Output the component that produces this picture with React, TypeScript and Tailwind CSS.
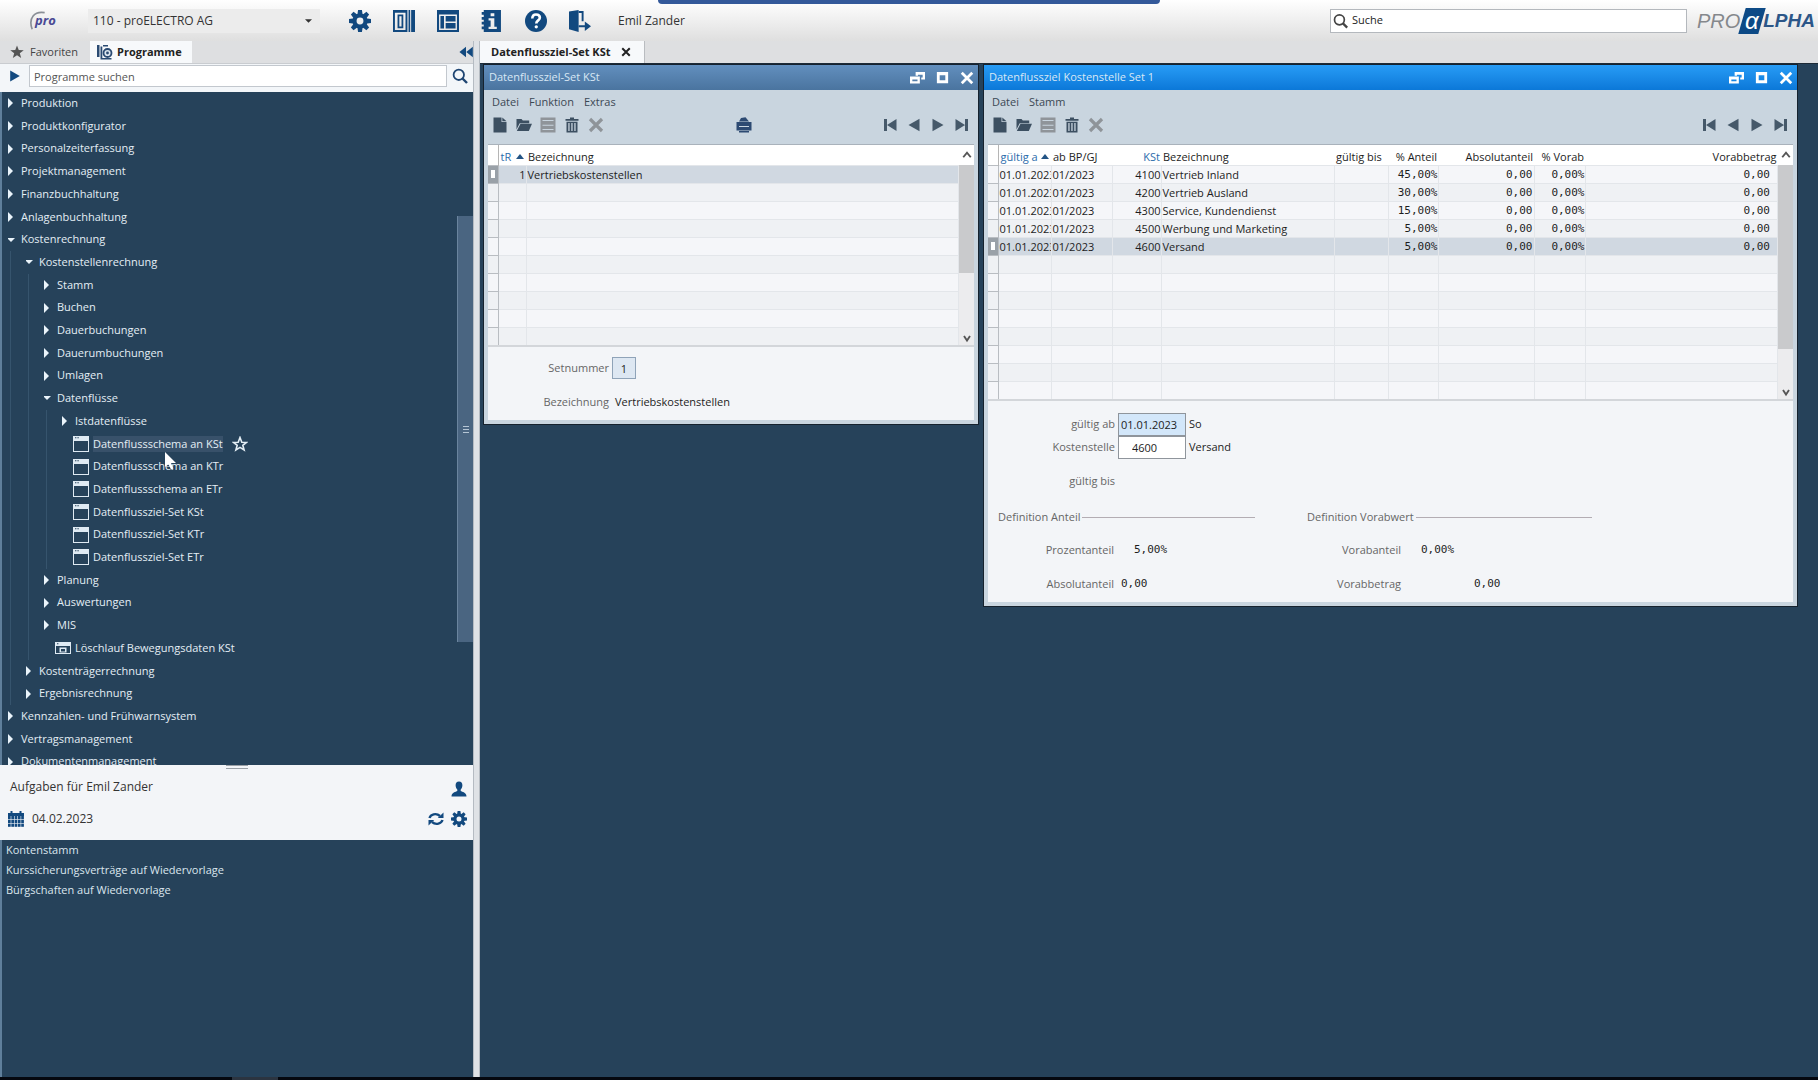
import React from "react";

type IconProps = { className?: string };

const Svg = ({ className = "size-4", children }: React.PropsWithChildren<IconProps>) => (
  <svg viewBox="0 0 16 16" className={className} fill="currentColor" aria-hidden="true">
    {children}
  </svg>
);

const teeth = [0, 45, 90, 135, 180, 225, 270, 315];
const Gear = ({ className }: IconProps) => (
  <Svg className={className}>
    {teeth.map((a) => (
      <path key={a} d="M6.6 0h2.8l.6 4H6z" transform={`rotate(${a} 8 8)`} />
    ))}
    <circle cx="8" cy="8" r="4" fill="none" stroke="currentColor" strokeWidth="3" />
  </Svg>
);
const Columns = ({ className }: IconProps) => (
  <Svg className={className}>
    <path fillRule="evenodd" d="M0 0h10.5v16H0zM1.4 2v12.500h7.700V2zM3.300 3.300h4.200v10H3.300zM4.600 4.500v7.500h1.600V4.500z" />
    <path d="M11.300 0h1.200v16h-1.200zM13.200 0H16v16h-2.800z" />
  </Svg>
);
const Layout = ({ className }: IconProps) => (
  <Svg className={className}>
    <path fillRule="evenodd" d="M0 0h16v16H0zM1.500 3.300v11.200h13V3.300z" />
    <path d="M2.500 4.300h2.600v9.200H2.500zM6.300 4.300h7.200v4H6.300zM6.300 9.500h7.200v4H6.300z" />
  </Svg>
);
const InfoBook = ({ className }: IconProps) => (
  <Svg className={className}>
    <path fillRule="evenodd" d="M2 0h12.500v16H2v-2H.5v-2H2v-1.500H.5v-2H2V7H.5V5H2V3.500H.5v-2H2zM7 2.300v2.200h2.700V2.300zM5.500 6v1.700H7v4.400H5.500v1.700h6v-1.700H9.700V6z" />
  </Svg>
);
const Help = ({ className }: IconProps) => (
  <Svg className={className}>
    <circle cx="8" cy="8" r="8" />
    <path d="M5.300 6.200C5.400 4 6.600 3.300 8 3.300s2.800.8 2.800 2.400C10.800 7.600 8.200 7.500 8.200 9.800" fill="none" stroke="#fff" strokeWidth="1.900" />
    <circle cx="8.200" cy="12.200" r="1.200" fill="#fff" />
  </Svg>
);
const Exit = ({ className }: IconProps) => (
  <Svg className={className}>
    <path d="M0 1l7-1v16l-7-2z" />
    <path d="M7 .8h3.600v7.400H9.200V2.200H7zM7 11h4.500V8.300l4.500 3.500-4.500 3.500v-2.700H7z" />
  </Svg>
);
const Star = ({ className }: IconProps) => (
  <Svg className={className}>
    <path d="M8 .5l2 5.200 5.700.2-4.500 3.400 1.600 5.500L8 11.600l-4.800 3.200 1.600-5.500L.3 5.900 6 5.700z" />
  </Svg>
);
const StarOutline = ({ className }: IconProps) => (
  <Svg className={className}>
    <path d="M8 1.500l1.800 4.700 4.700.2-3.700 2.900 1.300 4.700L8 11.400 3.900 14l1.300-4.700L1.500 6.400l4.700-.2z" fill="none" stroke="currentColor" strokeWidth="1.600" />
  </Svg>
);
const ProgramIcon = ({ className }: IconProps) => (
  <Svg className={className}>
    <path d="M0 1h2.500v12H0zM3.500 2.500h1.800V14H3.500zM6 1h5v1.500H6z" />
    <circle cx="10.500" cy="9" r="4" fill="#dce6f0" stroke="currentColor" strokeWidth="1.800" />
    <circle cx="10.500" cy="9" r="1.400" />
    <path d="M3.500 14h11v1.500h-11z" />
  </Svg>
);
const Lens = ({ className }: IconProps) => (
  <Svg className={className}>
    <circle cx="6.800" cy="6.800" r="5.200" fill="none" stroke="currentColor" strokeWidth="1.800" />
    <path d="M10.500 10.500l4.500 4.500" stroke="currentColor" strokeWidth="2.400" />
  </Svg>
);
const Collapse = ({ className }: IconProps) => (
  <Svg className={className}>
    <path d="M8 2v12L.5 8zM15.800 2v12L8.300 8z" />
  </Svg>
);
const Person = ({ className }: IconProps) => (
  <Svg className={className}>
    <path d="M8 .5c2.300 0 3.400 1.600 3.400 3.800 0 1.900-.8 3.400-1.700 4.200v1.600c1.500 1 5.800 1.300 5.800 5.400H.5c0-4.100 4.300-4.400 5.800-5.400V8.500C5.400 7.700 4.600 6.200 4.600 4.300 4.600 2.100 5.700.5 8 .5z" />
  </Svg>
);
const Calendar = ({ className }: IconProps) => (
  <Svg className={className}>
    <path d="M0 2h16v3H0zM2.500 0h2v3h-2zM11.500 0h2v3h-2z" />
    {[5, 8.800, 12.600].map((y) =>
      [0, 3.300, 6.600, 9.900, 13.200].map((x) => <rect key={`${x}-${y}`} x={x} y={y} width="2.700" height="3.200" />)
    )}
  </Svg>
);
const Refresh = ({ className }: IconProps) => (
  <Svg className={className}>
    <path d="M1.500 7C2.500 3.500 8 1.500 12 5M14.500 9C13.500 12.500 8 14.500 4 11" fill="none" stroke="currentColor" strokeWidth="2.400" />
    <path d="M15.500 1.500V7H9.800zM.5 14.500V9h5.700z" />
  </Svg>
);
const Doc = ({ className }: IconProps) => (
  <Svg className={className}>
    <path d="M1.500.5h8v4.500h5v10.500h-13z" />
    <path d="M10.300.5l4.200 3.800h-4.200z" />
  </Svg>
);
const Folder = ({ className }: IconProps) => (
  <Svg className={className}>
    <path d="M.5 2h5l1.300 1.600h6.400v2.600H3.700L.5 12.500z" />
    <path d="M4.500 6.800H16l-3.200 7.200H.8z" />
  </Svg>
);
const Save = ({ className }: IconProps) => (
  <Svg className={className}>
    <path fillRule="evenodd" d="M.5.500h15v15H.5zM2.500 3v1h11V3zM2.500 7.800v1h11v-1zM2.500 12v1h11v-1z" />
  </Svg>
);
const Trash = ({ className }: IconProps) => (
  <Svg className={className}>
    <path d="M6 .5h4v1.400h4.500v1.900h-13V1.900H6z" />
    <path fillRule="evenodd" d="M2.500 4.800h11v10.700h-11zM4.300 6v8h1.300V6zM7.300 6v8h1.300V6zM10.300 6v8h1.300V6z" />
  </Svg>
);
const Cross = ({ className }: IconProps) => (
  <Svg className={className}>
    <path d="M2 2l12 12M14 2L2 14" stroke="currentColor" strokeWidth="3.200" />
  </Svg>
);
const Printer = ({ className }: IconProps) => (
  <Svg className={className}>
    <path d="M3 4.500L5 1l4.500-.8L13 4.500z" />
    <path fillRule="evenodd" d="M.5 5h15v8.500h-15zM3 9v1h10V9z" />
    <path d="M3 14h10v1.500H3z" />
  </Svg>
);
const First = ({ className }: IconProps) => (
  <Svg className={className}>
    <path d="M2 2h3v12H2zM14.500 2v12L5 8z" />
  </Svg>
);
const Prev = ({ className }: IconProps) => (
  <Svg className={className}>
    <path d="M13.500 1.800v12.400L2.500 8z" />
  </Svg>
);
const Next = ({ className }: IconProps) => (
  <Svg className={className}>
    <path d="M2.500 1.800v12.400L13.500 8z" />
  </Svg>
);
const Last = ({ className }: IconProps) => (
  <Svg className={className}>
    <path d="M11 2h3v12h-3zM1.500 2v12L11 8z" />
  </Svg>
);
const Restore = ({ className }: IconProps) => (
  <Svg className={className}>
    <path fillRule="evenodd" d="M6 2h10v8h-4V8h1.500V5H8.500v1H6zM0 7h10.500v7.500H0zM2.500 10v2h5.500v-2z" />
  </Svg>
);
const Maximize = ({ className }: IconProps) => (
  <Svg className={className}>
    <path fillRule="evenodd" d="M2 2h12v12H2zM5 5.500V11h6V5.500z" />
  </Svg>
);
const WindowIcon = ({ className }: IconProps) => (
  <Svg className={className}>
    <path fillRule="evenodd" d="M0 0h16v16H0zM1 5v10h14V5zM2 1.200v1h1.400v-1zM4.400 1.200v1h1.400v-1z" />
  </Svg>
);
const BatchIcon = ({ className }: IconProps) => (
  <Svg className={className}>
    <path fillRule="evenodd" d="M0 2h16v12H0zM1 6v7h14V6zM2 3.200v1h1.400v-1z" />
    <path d="M4.500 7.500h7v5h-7zM6 9h4v2.500H6z" fillRule="evenodd" />
  </Svg>
);
const Chevron = ({ down = false }: { down?: boolean }) => (
  <svg viewBox="0 0 16 16" className="size-3 shrink-0" fill="none" stroke="#555" strokeWidth="2.500" aria-hidden="true">
    <path d={down ? "M4 4l4 6 4-6" : "M3 11l5-6 5 6"} />
  </svg>
);

const headerIcons = [
  { label: "Einstellungen", Icon: Gear },
  { label: "Spalten", Icon: Columns },
  { label: "Layout", Icon: Layout },
  { label: "Information", Icon: InfoBook },
  { label: "Hilfe", Icon: Help },
  { label: "Abmelden", Icon: Exit },
];

function Header() {
  return (
    <header className="relative flex h-[41px] shrink-0 items-center bg-linear-to-b from-white to-[#dfdfdf]">
      <div className="absolute top-0 left-1/2 h-[4px] w-[502px] -translate-x-1/2 rounded-b-md bg-[#34599a]" />
      <div className="relative ml-7 w-[60px] text-[13px] font-bold text-[#4a4a94] italic">
        <svg viewBox="0 0 24 24" className="absolute top-0 left-0 size-5" fill="none" stroke="#8a8f96" strokeWidth="2" aria-hidden="true">
          <path d="M20 2C8 0 0 8 5 22" />
        </svg>
        <span className="pl-[7px]">pro</span>
      </div>
      <div className="relative flex h-6 w-[232px] items-center">
        <select aria-label="Mandant" className="h-full w-full appearance-none bg-[#ececec] pl-[5px] text-[12px] text-[#333]">
          <option>110 - proELECTRO AG</option>
        </select>
        <svg viewBox="0 0 8 4" className="pointer-events-none absolute right-[8px] h-[4px] w-[7px]" fill="#333" aria-hidden="true">
          <path d="M0 0h8L4 4z" />
        </svg>
      </div>
      <nav className="ml-[29px] flex items-center gap-[22px] text-[#12497f]">
        {headerIcons.map(({ label, Icon }) => (
          <button key={label} aria-label={label} className="flex">
            <Icon className="size-[22px]" />
          </button>
        ))}
      </nav>
      <span className="ml-[27px] text-[12px] text-[#333]">Emil Zander</span>
      <label className="mr-[10px] ml-auto flex h-6 w-[357px] items-center border border-[#b4b8bd] bg-white pl-[2px] text-[#444]">
        <Lens className="size-4" />
        <input aria-label="Suche" defaultValue="Suche" className="ml-1 w-full bg-transparent text-[11px] text-[#222] outline-none" />
      </label>
      <div className="mr-[3px] flex items-center font-['Liberation_Sans',sans-serif] text-[19px] leading-6 italic">
        <span className="text-[20px] text-[#85888c]">PRO</span>
        <span className="relative flex h-[26px] w-[23px] items-center justify-center text-[24px] text-white">
          <span className="absolute inset-y-0 left-[2px] w-[20px] -skew-x-[16deg] bg-[#0d4a86]" />
          <span className="relative">α</span>
        </span>
        <span className="font-bold text-[#2c5688]">LPHA</span>
      </div>
    </header>
  );
}

type Node = { depth: number; label: string; kind?: "open" | "leaf" | "batch"; hover?: boolean };
const tree: Node[] = [
  { depth: 0, label: "Produktion" },
  { depth: 0, label: "Produktkonfigurator" },
  { depth: 0, label: "Personalzeiterfassung" },
  { depth: 0, label: "Projektmanagement" },
  { depth: 0, label: "Finanzbuchhaltung" },
  { depth: 0, label: "Anlagenbuchhaltung" },
  { depth: 0, label: "Kostenrechnung", kind: "open" },
  { depth: 1, label: "Kostenstellenrechnung", kind: "open" },
  { depth: 2, label: "Stamm" },
  { depth: 2, label: "Buchen" },
  { depth: 2, label: "Dauerbuchungen" },
  { depth: 2, label: "Dauerumbuchungen" },
  { depth: 2, label: "Umlagen" },
  { depth: 2, label: "Datenflüsse", kind: "open" },
  { depth: 3, label: "Istdatenflüsse" },
  { depth: 3, label: "Datenflussschema an KSt", kind: "leaf", hover: true },
  { depth: 3, label: "Datenflussschema an KTr", kind: "leaf" },
  { depth: 3, label: "Datenflussschema an ETr", kind: "leaf" },
  { depth: 3, label: "Datenflussziel-Set KSt", kind: "leaf" },
  { depth: 3, label: "Datenflussziel-Set KTr", kind: "leaf" },
  { depth: 3, label: "Datenflussziel-Set ETr", kind: "leaf" },
  { depth: 2, label: "Planung" },
  { depth: 2, label: "Auswertungen" },
  { depth: 2, label: "MIS" },
  { depth: 2, label: "Löschlauf Bewegungsdaten KSt", kind: "batch" },
  { depth: 1, label: "Kostenträgerrechnung" },
  { depth: 1, label: "Ergebnisrechnung" },
  { depth: 0, label: "Kennzahlen- und Frühwarnsystem" },
  { depth: 0, label: "Vertragsmanagement" },
  { depth: 0, label: "Dokumentenmanagement" },
];

function TreeRow({ depth, label, kind, hover }: Node) {
  const leaf = kind === "leaf" || kind === "batch";
  return (
    <li className="flex items-center">
      {Array.from({ length: depth }, (_, i) => (
        <span key={i} className="flex w-[18px] shrink-0 self-stretch pl-[2px]">
          <span className="border-l border-[#36546d]" />
        </span>
      ))}
      <button className="flex items-center">
        {leaf ? (
          <span className="mr-1 ml-[11px] flex text-[#dfeaf3]">
            {kind === "leaf" ? <WindowIcon /> : <BatchIcon />}
          </span>
        ) : (
          <svg viewBox="0 0 13 10" className="h-[10px] w-[13px]" fill="#eaf4fb" aria-hidden="true">
            <path d={kind === "open" ? "M-1 3h8L3 7z" : "M0 0v10L5 5z"} />
          </svg>
        )}
        <span className={hover ? "bg-[#38516a]" : ""}>{label}</span>
      </button>
      {hover && (
        <button aria-label="Zu Favoriten hinzufügen" className="ml-[9px] text-[#e4eef5]">
          <StarOutline />
        </button>
      )}
    </li>
  );
}

function Sidebar() {
  return (
    <aside className="flex w-[473px] shrink-0 flex-col">
      <div role="tablist" className="flex h-[22px] shrink-0 items-stretch bg-[#dedfe1]">
        <button role="tab" aria-selected="false" className="flex w-[90px] items-center gap-[6px] pl-[10px] text-[11px] text-[#444]">
          <Star className="size-[14px] text-[#555]" />
          Favoriten
        </button>
        <button role="tab" aria-selected="true" className="flex w-[102px] items-center gap-1 bg-[#f7f9fb] pl-[7px] text-[11px] font-bold text-[#222]">
          <ProgramIcon className="size-4 text-[#2a4a72]" />
          Programme
        </button>
        <button aria-label="Einklappen" className="mr-0 ml-auto flex items-center text-[#12497f]">
          <Collapse className="size-[14px]" />
        </button>
      </div>
      <div className="flex h-[29px] shrink-0 items-center border-t border-[#c9ccd0] bg-[#f3f6f9] pb-1">
        <button aria-label="Ausführen" className="ml-2 flex text-[#12497f]">
          <Next className="size-[14px]" />
        </button>
        <input aria-label="Programme suchen" defaultValue="Programme suchen" className="ml-[7px] h-[22px] min-w-0 flex-1 border border-[#c3c8ce] bg-white px-1 text-[11px] text-[#555] outline-none" />
        <button aria-label="Suchen" className="mx-[5px] flex text-[#1f4572]">
          <Lens className="size-4" />
        </button>
      </div>
      <div className="relative flex h-[673px] shrink-0 overflow-hidden border-l-2 border-[#5f7f9b] bg-[#26425a]">
        <ul className="ml-[6px] grid h-[681px] flex-1 auto-rows-fr text-[11px] text-[#e4eef5]">
          {tree.map((n) => (
            <TreeRow key={n.label} {...n} />
          ))}
        </ul>
        <div className="flex w-4 flex-col items-center pt-[124px]">
          <div className="flex h-[426px] w-full flex-col items-center justify-center gap-[2px] border-l border-[#6a849e] bg-[#4a6581]">
            <span className="h-px w-[6px] bg-[#b6c6d5]" />
            <span className="h-px w-[6px] bg-[#b6c6d5]" />
            <span className="h-px w-[6px] bg-[#b6c6d5]" />
          </div>
        </div>
        <svg viewBox="0 0 12 18" className="pointer-events-none absolute top-[360px] left-[163px] h-[18px] w-3" fill="#fff" aria-hidden="true">
          <path d="M0 0v15l3.500-3 2.500 5.500 2.300-1L6 11h5z" />
        </svg>
      </div>
      <section className="shrink-0 bg-[#f3f5f8] pb-[7px] text-[#333]">
        <div className="mx-auto flex h-1 w-[22px] border-y border-[#9aa0a6]" />
        <div className="flex h-9 items-center justify-between pr-[6px] pl-[10px]">
          <h2 className="text-[12px]">Aufgaben für Emil Zander</h2>
          <button aria-label="Benutzer" className="flex pt-1 text-[#12497f]">
            <Person />
          </button>
        </div>
        <div className="flex h-7 items-center pr-[6px] pl-2">
          <Calendar className="size-4 text-[#12497f]" />
          <span className="ml-2 text-[12px]">04.02.2023</span>
          <button aria-label="Aktualisieren" className="mr-[7px] ml-auto flex text-[#12497f]">
            <Refresh />
          </button>
          <button aria-label="Aufgaben einstellen" className="flex text-[#12497f]">
            <Gear />
          </button>
        </div>
      </section>
      <ul className="min-h-0 flex-1 border-l-2 border-[#5f7f9b] bg-[#26425a] text-[11px] leading-5 text-[#dbe6ee]">
        <li className="pl-1">Kontenstamm</li>
        <li className="pl-1">Kurssicherungsverträge auf Wiedervorlage</li>
        <li className="pl-1">Bürgschaften auf Wiedervorlage</li>
      </ul>
    </aside>
  );
}

const tools = [
  { label: "Neu", Icon: Doc },
  { label: "Öffnen", Icon: Folder },
  { label: "Speichern", Icon: Save, disabled: true },
  { label: "Löschen", Icon: Trash },
  { label: "Abbrechen", Icon: Cross, disabled: true },
];
const navs = [
  { label: "Erster", Icon: First },
  { label: "Vorheriger", Icon: Prev },
  { label: "Nächster", Icon: Next },
  { label: "Letzter", Icon: Last },
];

type WindowProps = React.PropsWithChildren<{ title: string; active?: boolean; menu: string[]; printer?: boolean; className: string }>;

function Window({ title, active, menu, printer, className, children }: WindowProps) {
  return (
    <section className={`absolute top-0 flex flex-col border border-[#16222e] bg-[#c9d5df] ${className}`}>
      <div className={`flex h-[25px] shrink-0 items-center pr-1 pl-[5px] text-white ${active ? "bg-linear-to-b from-[#279cf6] to-[#0b78d8]" : "bg-linear-to-b from-[#628fbe] to-[#4a749f]"}`}>
        <h2 className="text-[11px] text-[#d8e8f5]">{title}</h2>
        <div className="ml-auto flex items-center gap-[10px]">
          <button aria-label="Wiederherstellen" className="flex"><Restore className="size-[15px]" /></button>
          <button aria-label="Maximieren" className="flex"><Maximize className="size-[15px]" /></button>
          <button aria-label="Schließen" className="flex"><Cross className="size-[14px]" /></button>
        </div>
      </div>
      <div className="flex h-6 shrink-0 items-center gap-[10px] pl-2 text-[11px] text-[#3c4854]">
        {menu.map((m) => (
          <button key={m}>{m}</button>
        ))}
      </div>
      <div className="flex h-[30px] shrink-0 items-start pt-[3px] pr-[8px] pl-2 text-[#3c4f61]">
        <div className="flex gap-2">
          {tools.map(({ label, Icon, disabled }) => (
            <button key={label} aria-label={label} disabled={disabled} className={disabled ? "text-[#8f9499]" : ""}>
              <Icon />
            </button>
          ))}
        </div>
        {printer && (
          <button aria-label="Drucken" className="ml-[132px] text-[#2d4a72]">
            <Printer />
          </button>
        )}
        <div className="ml-auto flex gap-2">
          {navs.map(({ label, Icon }) => (
            <button key={label} aria-label={label}>
              <Icon className="size-4 text-[#46596a]" />
            </button>
          ))}
        </div>
      </div>
      <div className="mx-1 mb-1 flex min-h-0 flex-1 flex-col border-t border-[#a9b2bb] bg-[#f3f5f8]">{children}</div>
    </section>
  );
}

function Scrollbar({ thumb }: { thumb: string }) {
  return (
    <div className="flex w-[15px] shrink-0 flex-col items-center bg-[#ececee]">
      <span className="flex h-5 w-full items-center justify-center bg-white"><Chevron /></span>
      <span className={`w-full bg-[#c9cacc] ${thumb}`} />
      <span className="mt-auto"><Chevron down /></span>
    </div>
  );
}

type Column = { head: string; width: string; num?: boolean; mono?: boolean; blue?: boolean; sort?: boolean; pad?: string };

function DataTable({ columns, rows, total, selected }: { columns: Column[]; rows: string[][]; total: number; selected: number }) {
  return (
    <table className="w-full table-fixed border-collapse text-[11px] leading-[17px] text-[#1d1d1d]">
      <colgroup>
        <col className="w-[10px]" />
        {columns.map((c) => (
          <col key={c.head} className={c.width} />
        ))}
      </colgroup>
      <thead>
        <tr className="h-5 bg-white">
          <th className="border-r border-[#b5b5b5] p-0" />
          {columns.map((c) => (
            <th key={c.head} className={`p-0 align-bottom font-normal whitespace-nowrap ${c.num ? "pr-[1px] text-right" : "pl-[2px] text-left"} ${c.blue ? "text-[#2b6cab]" : ""}`}>
              <span className={c.sort ? "flex items-center justify-between" : ""}>
                {c.head}
                {c.sort && (
                  <svg viewBox="0 0 8 5" className="mr-[2px] h-[5px] w-2 shrink-0" fill="#235485" aria-hidden="true">
                    <path d="M0 5h8L4 0z" />
                  </svg>
                )}
              </span>
            </th>
          ))}
        </tr>
      </thead>
      <tbody>
        {Array.from({ length: total }, (_, r) => (
          <tr key={r} className={`h-[18px] ${r === selected ? "bg-[#d0d8e1]" : r % 2 === 0 ? "bg-[#f5f6f9]" : "bg-[#eff1f4]"}`}>
            <td className={`border-t border-r border-[#b9bdc2] p-0 ${r === selected ? "bg-[#9aa1a8]" : ""}`}>
              {r === selected && <span className="mx-auto block h-2 w-1 bg-white" />}
            </td>
            {columns.map((c, i) => (
              <td
                key={c.head}
                className={`overflow-hidden border-t border-r border-[#e3e6ea] p-0 whitespace-nowrap ${c.num ? "text-right" : "pl-[1px]"} ${c.pad ?? ""} ${c.mono ? "font-['DejaVu_Sans_Mono',monospace]" : ""}`}
              >
                {rows[r]?.[i] ?? ""}
              </td>
            ))}
          </tr>
        ))}
      </tbody>
    </table>
  );
}

const setColumns: Column[] = [
  { head: "tR", width: "w-[28px]", blue: true, sort: true, pad: "text-right" },
  { head: "Bezeichnung", width: "w-auto" },
];

const costColumns: Column[] = [
  { head: "gültig a", width: "w-[53px]", blue: true, sort: true },
  { head: "ab BP/GJ", width: "w-[61px]" },
  { head: "KSt", width: "w-[49px]", num: true, blue: true },
  { head: "Bezeichnung", width: "w-[173px]" },
  { head: "gültig bis", width: "w-[54px]" },
  { head: "% Anteil", width: "w-[50px]", num: true, mono: true },
  { head: "Absolutanteil", width: "w-[96px]", num: true, mono: true, pad: "pr-[1px]" },
  { head: "% Vorab", width: "w-[51px]", num: true, mono: true },
  { head: "Vorabbetrag", width: "w-auto", num: true, mono: true, pad: "pr-[7px]" },
];
const costRows = [
  ["01.01.2023", "01/2023", "4100", "Vertrieb Inland", "", "45,00%", "0,00", "0,00%", "0,00"],
  ["01.01.2023", "01/2023", "4200", "Vertrieb Ausland", "", "30,00%", "0,00", "0,00%", "0,00"],
  ["01.01.2023", "01/2023", "4300", "Service, Kundendienst", "", "15,00%", "0,00", "0,00%", "0,00"],
  ["01.01.2023", "01/2023", "4500", "Werbung und Marketing", "", "5,00%", "0,00", "0,00%", "0,00"],
  ["01.01.2023", "01/2023", "4600", "Versand", "", "5,00%", "0,00", "0,00%", "0,00"],
];

function Legend({ children, className }: React.PropsWithChildren<{ className: string }>) {
  return (
    <h3 className={`flex items-center gap-[2px] whitespace-nowrap text-[#666] ${className}`}>
      {children}
      <span className="h-px flex-1 bg-[#b3adb3]" />
    </h3>
  );
}

function Amount({ label, value, labelWidth, pad }: { label: string; value: string; labelWidth: string; pad: string }) {
  return (
    <div className="flex h-[34px] items-center">
      <dt className={`text-right text-[#666] ${labelWidth}`}>{label}</dt>
      <dd className={`font-['DejaVu_Sans_Mono',monospace] text-[#1d1d1d] ${pad}`}>{value}</dd>
    </div>
  );
}

function Workspace() {
  return (
    <main className="flex min-w-0 flex-1 flex-col">
      <div role="tablist" className="flex h-[22px] shrink-0 items-stretch bg-[#dedfe1]">
        <div className="flex items-center border-r border-[#b9bcc0] bg-[#f7f9fb] pr-[13px] pl-[11px] text-[11px] font-bold text-[#222]">
          <button role="tab" aria-selected="true" className="whitespace-nowrap">Datenflussziel-Set KSt</button>
          <button aria-label="Tab schließen" className="ml-[10px] flex"><Cross className="size-[10px]" /></button>
        </div>
      </div>
      <div className="relative flex-1 border-t border-[#1d2b38] bg-[#26425a]">
        <Window title="Datenflussziel-Set KSt" menu={["Datei", "Funktion", "Extras"]} printer className="left-[3px] w-[496px]">
          <div className="flex border-b-2 border-[#d3d6da]">
            <DataTable columns={setColumns} rows={[["1", "Vertriebskostenstellen"]]} total={10} selected={0} />
            <Scrollbar thumb="h-[108px]" />
          </div>
          <form className="flex flex-col gap-[10px] pt-[9px] pb-[6px] text-[11px]">
            <div className="flex h-6 items-center">
              <label htmlFor="setnr" className="w-[121px] text-right text-[#666]">Setnummer</label>
              <input id="setnr" defaultValue="1" className="ml-[3px] h-[22px] w-6 border border-[#8fa3b8] bg-[#dde7f2] text-center text-[#1d1d1d] outline-none" />
            </div>
            <div className="flex h-6 items-center">
              <span className="w-[121px] text-right text-[#666]">Bezeichnung</span>
              <span className="ml-[6px] text-[#1d1d1d]">Vertriebskostenstellen</span>
            </div>
          </form>
        </Window>
        <Window title="Datenflussziel Kostenstelle Set 1" active menu={["Datei", "Stamm"]} className="left-[503px] w-[815px]">
          <div className="flex border-b-2 border-[#d3d6da]">
            <DataTable columns={costColumns} rows={costRows} total={13} selected={4} />
            <Scrollbar thumb="h-[184px]" />
          </div>
          <form className="pt-[12px] pb-[1px] text-[11px]">
            <div className="flex h-[23px] items-center">
              <label htmlFor="from" className="w-[127px] text-right text-[#666]">gültig ab</label>
              <input id="from" defaultValue="01.01.2023" className="ml-[3px] h-[23px] w-[68px] border border-[#8f959c] bg-[#d3e7fa] px-[2px] text-[#1d1d1d] outline-none" />
              <span className="ml-[3px] text-[#1d1d1d]">So</span>
            </div>
            <div className="flex h-[23px] items-center">
              <label htmlFor="kst" className="w-[127px] text-right text-[#666]">Kostenstelle</label>
              <input id="kst" defaultValue="4600" className="ml-[3px] h-[23px] w-[68px] border border-[#8f959c] bg-white px-[13px] text-[#1d1d1d] outline-none" />
              <span className="ml-[3px] text-[#1d1d1d]">Versand</span>
            </div>
            <p className="mt-[11px] flex h-[23px] items-center">
              <span className="w-[127px] text-right text-[#666]">gültig bis</span>
            </p>
            <div className="mt-[12px] flex pl-[10px]">
              <div className="w-[309px]">
                <Legend className="h-6 w-[257px]">Definition Anteil</Legend>
                <dl className="mt-1">
                  <Amount label="Prozentanteil" value="5,00%" labelWidth="w-[116px]" pad="pl-5" />
                  <Amount label="Absolutanteil" value="0,00" labelWidth="w-[116px]" pad="pl-[7px]" />
                </dl>
              </div>
              <div>
                <Legend className="h-6 w-[285px]">Definition Vorabwert</Legend>
                <dl className="mt-1">
                  <Amount label="Vorabanteil" value="0,00%" labelWidth="w-[94px]" pad="pl-5" />
                  <Amount label="Vorabbetrag" value="0,00" labelWidth="w-[94px]" pad="pl-[73px]" />
                </dl>
              </div>
            </div>
          </form>
        </Window>
      </div>
    </main>
  );
}

export default function App() {
  return (
    <div className="flex h-screen w-full flex-col overflow-hidden bg-[#26425a] font-['Open_Sans','Noto_Sans',sans-serif]">
      <Header />
      <div className="flex min-h-0 flex-1">
        <Sidebar />
        <div className="w-[7px] shrink-0 border-x border-[#b5bbc2] bg-[#dfe2e6]" />
        <Workspace />
      </div>
      <footer className="h-[3px] shrink-0 bg-[#05080f]">
        <div className="ml-[232px] h-full w-[46px] bg-[#2b3440]" />
      </footer>
    </div>
  );
}
